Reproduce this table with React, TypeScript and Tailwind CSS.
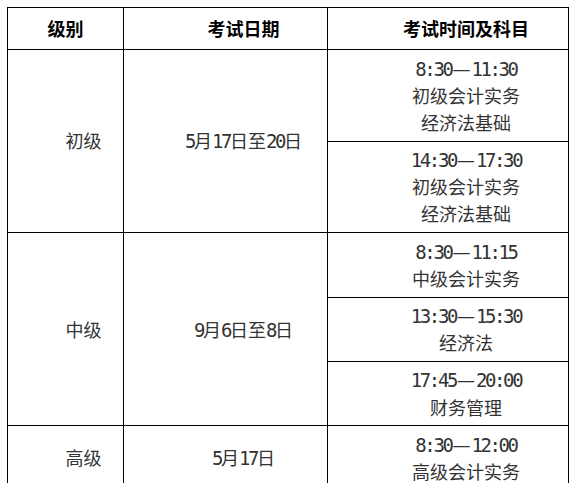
import React from "react";

const CJK = '"Noto Sans CJK SC", "Noto Sans", sans-serif';

function Txt({ s }: { s: string }) {
  const parts = s.split(/([0-9:]+|—)/).filter((p) => p.length > 0);
  return (
    <>
      {parts.map((p, i) =>
        /^[0-9:]+$/.test(p) ? (
          <span
            key={i}
            className="text-[19px] leading-none tracking-[-2.4px] font-['DejaVu_Sans_Mono',monospace]"
          >
            {p}
          </span>
        ) : p === "—" ? (
          <span
            key={i}
            className="leading-none px-[1px] font-['DejaVu_Sans',sans-serif] relative top-[-1px]"
          >
            {p}
          </span>
        ) : (
          <span key={i} className="leading-none">
            {p}
          </span>
        )
      )}
    </>
  );
}

function Lines({ lines }: { lines: string[] }) {
  return (
    <>
      {lines.map((l, i) => (
        <div key={i} className="h-[27.2px] leading-[27.2px] whitespace-nowrap">
          <Txt s={l} />
        </div>
      ))}
    </>
  );
}

const cell = "border border-black text-center align-middle";
const body = cell + " pl-[36px] py-[4.5px]";

export default function App() {
  return (
    <div
      className="w-[575px] h-[483px] overflow-hidden bg-white pt-[7px] pl-[7px] text-[18px] text-[#333]"
      style={{ fontFamily: CJK }}
    >
      <table className="w-[561px] table-fixed border-collapse">
        <colgroup>
          <col className="w-[116px]" />
          <col className="w-[204px]" />
          <col className="w-[241px]" />
        </colgroup>
        <tbody>
          <tr className="h-[42px]">
            <td className={cell + " font-bold text-black"}>级别</td>
            <td className={cell + " pl-[36px] font-bold text-black"}>考试日期</td>
            <td className={cell + " pl-[36px] font-bold text-black"}>考试时间及科目</td>
          </tr>
          <tr>
            <td rowSpan={2} className={body}>
              <Lines lines={["初级"]} />
            </td>
            <td rowSpan={2} className={body}>
              <Lines lines={["5月17日至20日"]} />
            </td>
            <td className={body}>
              <Lines lines={["8:30—11:30", "初级会计实务", "经济法基础"]} />
            </td>
          </tr>
          <tr>
            <td className={body}>
              <Lines lines={["14:30—17:30", "初级会计实务", "经济法基础"]} />
            </td>
          </tr>
          <tr>
            <td rowSpan={3} className={body}>
              <Lines lines={["中级"]} />
            </td>
            <td rowSpan={3} className={body}>
              <Lines lines={["9月6日至8日"]} />
            </td>
            <td className={body}>
              <Lines lines={["8:30—11:15", "中级会计实务"]} />
            </td>
          </tr>
          <tr>
            <td className={body}>
              <Lines lines={["13:30—15:30", "经济法"]} />
            </td>
          </tr>
          <tr>
            <td className={body}>
              <Lines lines={["17:45—20:00", "财务管理"]} />
            </td>
          </tr>
          <tr>
            <td className={body}>
              <Lines lines={["高级"]} />
            </td>
            <td className={body}>
              <Lines lines={["5月17日"]} />
            </td>
            <td className={body}>
              <Lines lines={["8:30—12:00", "高级会计实务"]} />
            </td>
          </tr>
        </tbody>
      </table>
    </div>
  );
}
